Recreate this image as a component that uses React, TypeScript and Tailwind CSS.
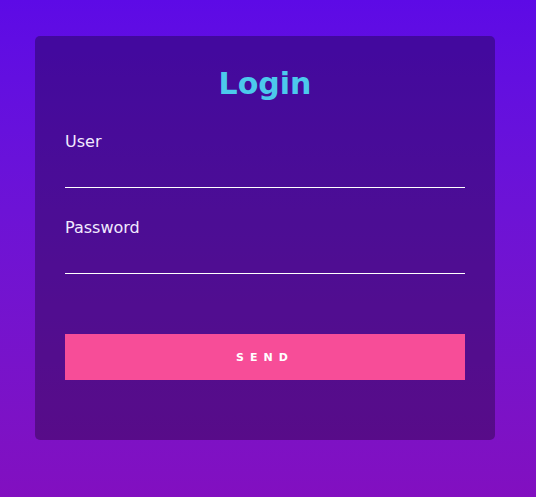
import React from "react";

export default function App() {
  return (
    <div
      className="w-[536px] h-[497px] overflow-hidden bg-gradient-to-b from-[#5d0ae6] to-[#820fc0] pt-[36px]"
      style={{ fontFamily: '"DejaVu Sans", sans-serif' }}
    >
      <div className="ml-[35px] w-[460px] h-[404px] rounded-[5px] bg-black/30 px-[30px] pt-[31px]">
        <h1 className="text-center text-[30px] leading-[34px] font-bold text-[#4cc9ec]">
          Login
        </h1>
        <div className="mt-[31px]">
          <label className="block text-[16px] leading-[19px] text-[#f2eaff]">User</label>
          <input
            type="text"
            className="block w-full h-[37px] border-b border-white bg-transparent outline-none text-white"
          />
        </div>
        <div className="mt-[30px]">
          <label className="block text-[16px] leading-[19px] text-[#f2eaff]">Password</label>
          <input
            type="password"
            className="block w-full h-[37px] border-b border-white bg-transparent outline-none text-white"
          />
        </div>
        <button className="mt-[60px] block w-full h-[46px] bg-[#f74d98] text-white text-[11px] leading-[14px] font-bold tracking-[6px] pt-[2px]">
          SEND
        </button>
      </div>
    </div>
  );
}
